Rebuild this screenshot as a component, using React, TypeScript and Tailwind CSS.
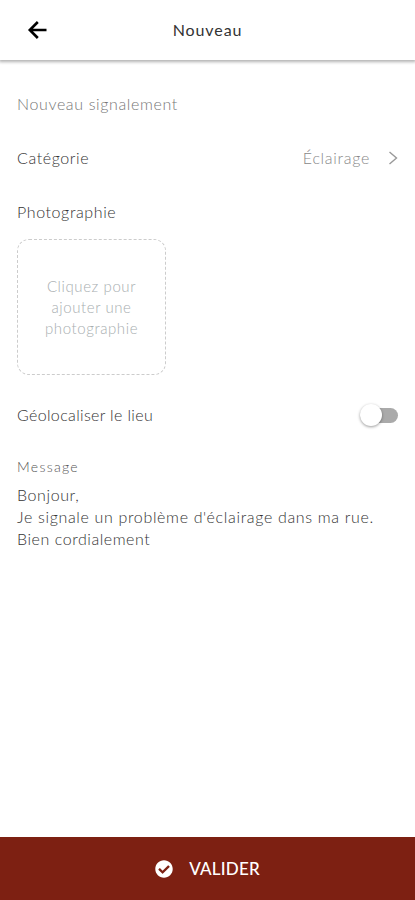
import { useState } from "react";
import { FaCheckCircle } from "react-icons/fa";

function Header() {
  return (
    <header className="relative flex h-[60px] shrink-0 items-center justify-center bg-white shadow-[0_1px_3px_1px_rgba(0,0,0,0.3)]">
      <button type="button" aria-label="Retour" className="absolute left-[27px] top-[20px] text-black">
        <svg width="21" height="20" viewBox="0 0 21 20" fill="none" stroke="currentColor" strokeWidth="2.6">
          <path d="M19.5 10H3M10.8 2L2.8 10l8 8" />
        </svg>
      </button>
      <h1 className="text-[16px] font-normal tracking-[0.9px] text-[#333]">Nouveau</h1>
    </header>
  );
}

export default function App() {
  const [located, setLocated] = useState(false);

  return (
    <div className="flex h-[900px] w-full flex-col bg-white font-['Lato',sans-serif] text-[16px] font-light leading-[22px] text-[#333]">
      <Header />
      <main className="flex flex-1 flex-col px-[17px] pt-[33px]">
        <div className="tracking-[0.63px] text-[#777]">Nouveau signalement</div>
        <div className="mt-8 flex items-center">
          <span className="tracking-[0.6px]">Catégorie</span>
          <span className="ml-auto tracking-[0.7px] text-[#888]">Éclairage</span>
          <svg className="ml-[18px]" width="10" height="14" viewBox="0 0 10 14" fill="none" stroke="#999" strokeWidth="1.4">
            <path d="M1.5 1l7 6-7 6" />
          </svg>
        </div>
        <div className="mt-8 tracking-[0.6px]">Photographie</div>
        <button
          type="button"
          className="mt-[16px] flex h-[136px] w-[149px] items-center justify-center rounded-[12px] border border-dashed border-[#ccc] text-center text-[15px] leading-[21px] tracking-[0.6px] text-[#a8aeb0]"
        >
          <span>
            Cliquez pour
            <br />
            ajouter une
            <br />
            photographie
          </span>
        </button>
        <div className="mt-[29px] flex items-center justify-between">
          <span className="tracking-[0.35px]">Géolocaliser le lieu</span>
          <button
            type="button"
            role="switch"
            aria-label="Géolocaliser le lieu"
            aria-checked={located}
            onClick={() => setLocated(!located)}
            className="flex h-[15px] w-[38px] items-center rounded-full bg-[#aaa]"
          >
            <span className="h-[22px] w-[22px] rounded-full bg-white shadow-[0_1px_3px_rgba(0,0,0,0.4)]" />
          </button>
        </div>
        <div className="mt-[30px] text-[14px] tracking-[1.3px] text-[#555]">Message</div>
        <div className="mt-[6px]">
          <p className="tracking-[0.6px]">Bonjour,</p>
          <p className="tracking-[0.66px]">Je signale un problème d'éclairage dans ma rue.</p>
          <p className="tracking-[0.55px]">Bien cordialement</p>
        </div>
      </main>
      <button
        type="button"
        className="flex h-[63px] w-full shrink-0 items-center justify-center gap-4 bg-[#7d2012] text-white"
      >
        <FaCheckCircle className="h-[18px] w-[18px]" />
        <span className="text-[17px] font-medium tracking-[0.2px]">VALIDER</span>
      </button>
    </div>
  );
}
